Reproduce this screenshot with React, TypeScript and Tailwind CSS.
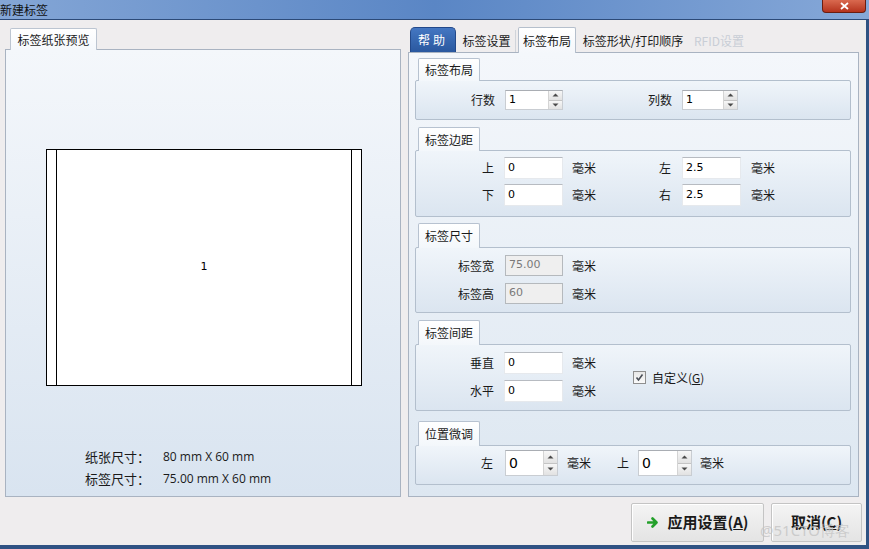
import React from "react";

const Up = () => (
  <svg width="7" height="4" viewBox="0 0 7 4"><path d="M0.5 3.5 L3.5 0.5 L6.5 3.5 Z" fill="#4a4a4a" /></svg>
);
const Down = () => (
  <svg width="7" height="4" viewBox="0 0 7 4"><path d="M0.5 0.5 L3.5 3.5 L6.5 0.5 Z" fill="#4a4a4a" /></svg>
);

function Spinner({ value, w, big }: { value: string; w: string; big?: boolean }) {
  return (
    <div className={`flex ${big ? "h-[26px]" : "h-[20px]"} ${w} border border-[#c9cdd2] border-t-[#a9adb3] bg-white`}>
      <div className={`flex-1 flex items-center pl-[3px] ${big ? "text-[14px]" : "text-[11px]"} font-['DejaVu_Sans',sans-serif] text-black`}>{value}</div>
      <div className="w-[14px] flex flex-col border-l border-[#d4d4d4]">
        <div className="flex-1 flex items-center justify-center bg-gradient-to-b from-[#f7f7f7] to-[#e2e2e2] border-b border-[#c4c4c4]"><Up /></div>
        <div className="flex-1 flex items-center justify-center bg-gradient-to-b from-[#f7f7f7] to-[#e2e2e2]"><Down /></div>
      </div>
    </div>
  );
}

function TextBox({ value, w, h, disabled }: { value: string; w: string; h: string; disabled?: boolean }) {
  return (
    <div
      className={`flex items-center ${w} ${h} pl-[3px] text-[11px] font-['DejaVu_Sans',sans-serif] ${
        disabled
          ? "bg-[#efefef] border border-[#b5b9bd] text-[#7a7a7a]"
          : "bg-white border border-[#e6e9ed] border-t-[#b7bbc1] text-black"
      }`}
    >
      {value}
    </div>
  );
}

function Group({
  title,
  boxH,
  tabH,
  mt,
  children,
}: {
  title: string;
  boxH: string;
  tabH: string;
  mt: string;
  children: React.ReactNode;
}) {
  return (
    <div className={`flex flex-col ${mt}`}>
      <div className={`relative z-10 ml-[3px] -mb-px flex ${tabH} w-[62px] items-center justify-center rounded-t-[2px] border border-b-0 border-[#b7c2d0] bg-gradient-to-b from-white to-[#f3f7fb] text-[12px] text-[#1a1a1a]`}>
        {title}
      </div>
      <div className={`${boxH} rounded-[2px] border border-[#b3bfcd] bg-gradient-to-b from-[#f0f5fa] to-[#dbe5f0]`}>
        {children}
      </div>
    </div>
  );
}

const Label = ({ w, children, mr }: { w: string; mr: string; children: React.ReactNode }) => (
  <div className={`${w} ${mr} shrink-0 text-right text-[12px] text-[#1a1a1a]`}>{children}</div>
);
const MM = ({ ml }: { ml: string }) => <div className={`${ml} w-[25px] shrink-0 text-[12px] text-[#1a1a1a]`}>毫米</div>;

export default function App() {
  return (
    <div className="relative flex h-[549px] w-[869px] flex-col overflow-hidden bg-[#efedee] font-['Noto_Sans_CJK_SC','Microsoft_YaHei',sans-serif]">
      {/* title bar */}
      <div className="flex h-[20px] shrink-0 items-start justify-between border-b border-[#2c4a78] bg-gradient-to-r from-[#84a6d6] via-[#5a86c5] to-[#86a8d8]">
        <div className="pt-[1px] text-[12px] leading-[17px] text-[#111]">新建标签</div>
        <div className="mr-[3px] flex h-[13px] w-[44px] items-center justify-center rounded-b-[4px] border border-t-0 border-[#6b1d10] bg-gradient-to-b from-[#d9694f] to-[#b5321c]">
          <svg width="9" height="8" viewBox="0 0 9 8"><path d="M1 1 L8 7 M8 1 L1 7" stroke="white" strokeWidth="1.8" /></svg>
        </div>
      </div>

      {/* body */}
      <div className="flex flex-1 flex-col border-r-[3px] border-b-[4px] border-[#2f5283] pl-[5px] pt-[8px]">
        <div className="flex">
          {/* left column */}
          <div className="flex w-[396px] flex-col">
            <div className="relative z-10 ml-[5px] -mb-px flex h-[22px] w-[87px] items-center justify-center rounded-t-[2px] border border-b-0 border-[#bcc5d1] bg-gradient-to-b from-white to-[#f5f8fc] text-[12px] text-[#1a1a1a]">
              标签纸张预览
            </div>
            <div className="h-[448px] border border-[#a9b3c1] bg-gradient-to-b from-[#f4f7fb] to-[#d9e4f0] pl-[40px] pt-[99px]">
              <div className="relative flex h-[237px] w-[316px] items-center justify-center border border-black bg-white">
                <div className="absolute left-[9px] top-0 h-full w-px bg-black" />
                <div className="absolute right-[9px] top-0 h-full w-px bg-black" />
                <span className="font-['DejaVu_Sans',sans-serif] text-[11px] text-black">1</span>
              </div>
              <div className="ml-[39px] mt-[63px] flex flex-col gap-[6px] text-[12.5px] text-[#1a1a1a]">
                <div className="flex h-[16px] items-center">
                  <span className="w-[78px] text-[13px]">纸张尺寸：</span>
                  <span className="font-['Open_Sans',sans-serif] text-[12px]">80 mm X 60 mm</span>
                </div>
                <div className="flex h-[16px] items-center">
                  <span className="w-[78px] text-[13px]">标签尺寸：</span>
                  <span className="font-['Open_Sans',sans-serif] text-[12px]">75.00 mm X 60 mm</span>
                </div>
              </div>
            </div>
          </div>

          {/* right column */}
          <div className="ml-[7px] flex w-[451px] flex-col">
            <div className="flex h-[24px] items-end">
              <div className="relative z-10 ml-[2px] flex h-[25px] w-[46px] items-center justify-center rounded-t-[5px] border border-b-0 border-[#23498a] bg-gradient-to-b from-[#4477c2] to-[#2a589f] text-[12px] tracking-[3px] text-white">
                帮助
              </div>
              <div className="ml-[2px] flex h-[22px] w-[58px] items-center justify-center border-r border-[#d0d4da] text-[12px] text-[#1a1a1a]">标签设置</div>
              <div className="relative z-10 ml-[2px] -mb-px flex h-[26px] w-[58px] items-center justify-center rounded-t-[2px] border border-b-0 border-[#b5bfcc] bg-gradient-to-b from-white to-[#f4f7fb] text-[12px] text-[#1a1a1a]">
                标签布局
              </div>
              <div className="flex h-[22px] w-[114px] items-center justify-center text-[12px] text-[#1a1a1a]">标签形状/打印顺序</div>
              <div className="flex h-[22px] items-center pl-[4px] text-[12px] text-[#c9ced6]">RFID设置</div>
            </div>
            <div className="flex h-[445px] flex-col border border-[#a9b3c1] bg-gradient-to-b from-[#f4f7fb] to-[#dde7f1] pl-[6px] pr-[7px] pt-[5px]">
              <Group title="标签布局" boxH="h-[40px]" tabH="h-[23px]" mt="mt-0">
                <div className="flex h-full items-center">
                  <Label w="w-[79px]" mr="mr-[10px]">行数</Label>
                  <Spinner value="1" w="w-[58px]" />
                  <Label w="w-[109px]" mr="mr-[10px]">列数</Label>
                  <Spinner value="1" w="w-[56px]" />
                </div>
              </Group>
              <Group title="标签边距" boxH="h-[67px]" tabH="h-[24px]" mt="mt-[7px]">
                <div className="flex flex-col gap-[5px] pt-[6px]">
                  <div className="flex h-[22px] items-center">
                    <Label w="w-[78px]" mr="mr-[10px]">上</Label>
                    <TextBox value="0" w="w-[59px]" h="h-[22px]" />
                    <MM ml="ml-[9px]" />
                    <Label w="w-[74px]" mr="mr-[11px]">左</Label>
                    <TextBox value="2.5" w="w-[59px]" h="h-[22px]" />
                    <MM ml="ml-[10px]" />
                  </div>
                  <div className="flex h-[22px] items-center">
                    <Label w="w-[78px]" mr="mr-[10px]">下</Label>
                    <TextBox value="0" w="w-[59px]" h="h-[22px]" />
                    <MM ml="ml-[9px]" />
                    <Label w="w-[74px]" mr="mr-[11px]">右</Label>
                    <TextBox value="2.5" w="w-[59px]" h="h-[22px]" />
                    <MM ml="ml-[10px]" />
                  </div>
                </div>
              </Group>
              <Group title="标签尺寸" boxH="h-[66px]" tabH="h-[25px]" mt="mt-[6px]">
                <div className="flex flex-col gap-[7px] pt-[7px]">
                  <div className="flex h-[21px] items-center">
                    <Label w="w-[78px]" mr="mr-[11px]">标签宽</Label>
                    <TextBox value="75.00" w="w-[58px]" h="h-[21px]" disabled />
                    <MM ml="ml-[9px]" />
                  </div>
                  <div className="flex h-[21px] items-center">
                    <Label w="w-[78px]" mr="mr-[11px]">标签高</Label>
                    <TextBox value="60" w="w-[58px]" h="h-[21px]" disabled />
                    <MM ml="ml-[9px]" />
                  </div>
                </div>
              </Group>
              <Group title="标签间距" boxH="h-[67px]" tabH="h-[25px]" mt="mt-[7px]">
                <div className="flex h-full items-center">
                  <div className="flex flex-col gap-[6px] self-start pt-[7px]">
                    <div className="flex h-[22px] items-center">
                      <Label w="w-[78px]" mr="mr-[10px]">垂直</Label>
                      <TextBox value="0" w="w-[59px]" h="h-[22px]" />
                      <MM ml="ml-[9px]" />
                    </div>
                    <div className="flex h-[22px] items-center">
                      <Label w="w-[78px]" mr="mr-[10px]">水平</Label>
                      <TextBox value="0" w="w-[59px]" h="h-[22px]" />
                      <MM ml="ml-[9px]" />
                    </div>
                  </div>
                  <div className="ml-[36px] flex items-center">
                    <div className="flex h-[13px] w-[13px] items-center justify-center border border-[#8f8f8f] bg-gradient-to-b from-[#e8e8e8] to-[#fafafa]">
                      <svg width="9" height="9" viewBox="0 0 9 9"><path d="M1.5 4.5 L3.5 7 L7.5 1.5" fill="none" stroke="#4a4f58" strokeWidth="1.6" /></svg>
                    </div>
                    <span className="ml-[6px] text-[12px] text-[#1a1a1a]">
                      自定义(<span className="underline">G</span>)
                    </span>
                  </div>
                </div>
              </Group>
              <Group title="位置微调" boxH="h-[40px]" tabH="h-[25px]" mt="mt-[10px]">
                <div className="pt-[4px]">
                  <div className="flex h-[26px] items-center">
                    <Label w="w-[77px]" mr="mr-[12px]">左</Label>
                    <Spinner value="0" w="w-[53px]" big />
                    <MM ml="ml-[9px]" />
                    <div className="ml-[25px] mr-[9px] text-[12px] text-[#1a1a1a]">上</div>
                    <Spinner value="0" w="w-[54px]" big />
                    <MM ml="ml-[8px]" />
                  </div>
                </div>
              </Group>
            </div>
          </div>
        </div>

        {/* buttons */}
        <div className="mt-[6px] flex justify-end gap-[7px] pr-[4px]">
          <div className="flex h-[39px] w-[133px] items-center justify-center gap-[9px] rounded-[2px] border border-[#c4c4c4] bg-gradient-to-b from-[#f4f4f4] to-[#e4e4e4] shadow-[inset_1px_1px_0_#ffffff]">
            <svg width="12" height="11" viewBox="0 0 12 11"><path d="M1 5.5 H9 M5.5 1.5 L9.5 5.5 L5.5 9.5" fill="none" stroke="#23a02a" strokeWidth="2.6" strokeLinecap="round" strokeLinejoin="round" /></svg>
            <span className="text-[15px] font-bold text-[#1a1a1a]">应用设置(<span className="underline">A</span>)</span>
          </div>
          <div className="flex h-[39px] w-[91px] items-center justify-center rounded-[2px] border border-[#c4c4c4] bg-gradient-to-b from-[#f4f4f4] to-[#e4e4e4] shadow-[inset_1px_1px_0_#ffffff]">
            <span className="text-[15px] font-bold text-[#1a1a1a]">取消(<span className="underline">C</span>)</span>
          </div>
        </div>
      </div>

      {/* watermark */}
      <div className="pointer-events-none absolute left-[760px] top-[519px] font-['Noto_Sans',sans-serif] text-[15px] text-[#c4c4c4]/80">
        @51CTO博客
      </div>
    </div>
  );
}
